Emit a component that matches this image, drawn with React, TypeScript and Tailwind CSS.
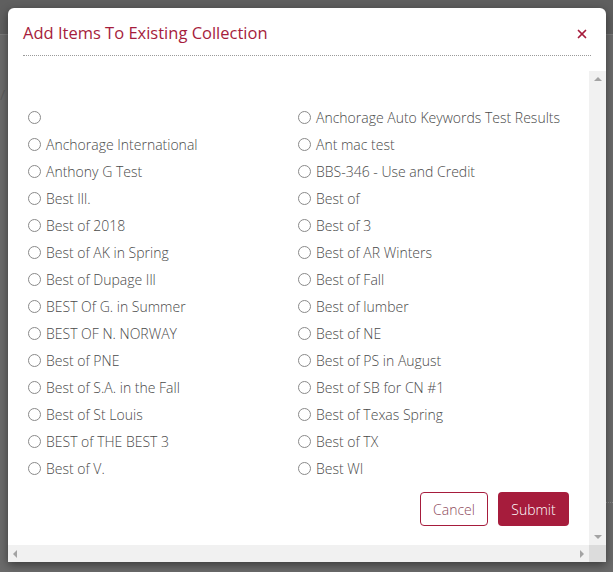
import { X } from "lucide-react";

const leftItems = [
  "",
  "Anchorage International",
  "Anthony G Test",
  "Best Ill.",
  "Best of 2018",
  "Best of AK in Spring",
  "Best of Dupage Ill",
  "BEST Of G. in Summer",
  "BEST OF N. NORWAY",
  "Best of PNE",
  "Best of S.A. in the Fall",
  "Best of St Louis",
  "BEST of THE BEST 3",
  "Best of V.",
];

const rightItems = [
  "Anchorage Auto Keywords Test Results",
  "Ant mac test",
  "BBS-346 - Use and Credit",
  "Best of",
  "Best of 3",
  "Best of AR Winters",
  "Best of Fall",
  "Best of lumber",
  "Best of NE",
  "Best of PS in August",
  "Best of SB for CN #1",
  "Best of Texas Spring",
  "Best of TX",
  "Best WI",
];

function RadioRow({ label }: { label: string }) {
  return (
    <label className="flex h-[27px] items-center gap-[5px] whitespace-nowrap">
      <span className="h-[13px] w-[13px] shrink-0 rounded-full border border-[#8a8a8a] bg-white" />
      <span>{label}</span>
    </label>
  );
}

function Arrow({ dir }: { dir: "up" | "down" | "left" | "right" }) {
  const shapes = {
    up: "border-x-[4px] border-b-[4px] border-x-transparent border-b-[#a3a3a3]",
    down: "border-x-[4px] border-t-[4px] border-x-transparent border-t-[#a3a3a3]",
    left: "border-y-[4px] border-r-[4px] border-y-transparent border-r-[#a3a3a3]",
    right: "border-y-[4px] border-l-[4px] border-y-transparent border-l-[#a3a3a3]",
  };
  return <span className={`block h-0 w-0 ${shapes[dir]}`} />;
}

export default function App() {
  return (
    <div
      className="relative h-[572px] w-[613px] overflow-hidden bg-[#6b6b6b] pl-2 pt-2"
      style={{ fontFamily: '"Open Sans", "Noto Sans", sans-serif' }}
    >
      {/* page behind the backdrop */}
      <div className="absolute inset-x-0 top-0 h-[35px] border-b border-[#7a7a7a] bg-[#5f5f5f]" />
      <span className="absolute left-0 top-[84px] text-[14px] text-[#5a5a5a]">/</span>
      <div className="absolute right-0 top-[502px] w-[7px] border-t border-dotted border-[#8a8a8a]" />

      <div className="relative flex h-[554px] w-[598px] flex-col rounded-t-[6px] bg-white shadow-[0_3px_10px_rgba(0,0,0,0.45)]">
        <div className="mx-[15px] flex h-[48px] items-center justify-between border-b border-dotted border-[#9a9a9a] pt-[4px]">
          <h2 className="text-[16.5px] font-normal text-[#a61c3c]">
            Add Items To Existing Collection
          </h2>
          <X size={14} strokeWidth={3} className="mr-[2px] text-[#a61c3c]" />
        </div>

        <div className="mt-[15px] flex min-h-0 flex-1 flex-col">
          <div className="flex min-h-0 flex-1">
            <div className="flex flex-1 flex-col pl-5 pr-5 pt-[33px] text-[14px] font-light text-[#4a4a4a]">
              <div className="grid grid-cols-[270px_1fr]">
                <div className="flex flex-col">
                  {leftItems.map((item, i) => (
                    <RadioRow key={i} label={item} />
                  ))}
                </div>
                <div className="flex flex-col">
                  {rightItems.map((item) => (
                    <RadioRow key={item} label={item} />
                  ))}
                </div>
              </div>
              <div className="mt-[10px] flex justify-end gap-[10px]">
                <button
                  type="button"
                  className="h-[34px] w-[68px] rounded-[4px] border border-[#a61c3c] bg-white text-[14px] font-light text-[#8d4a5b]"
                >
                  Cancel
                </button>
                <button
                  type="button"
                  className="h-[34px] w-[71px] rounded-[4px] bg-[#a61c3c] text-[14px] text-white"
                >
                  Submit
                </button>
              </div>
            </div>
            <div className="flex w-[17px] flex-col items-center justify-between bg-[#f1f1f1] py-[6px]">
              <Arrow dir="up" />
              <Arrow dir="down" />
            </div>
          </div>
          <div className="flex h-[17px]">
            <div className="flex flex-1 items-center justify-between bg-[#f1f1f1] px-[5px]">
              <Arrow dir="left" />
              <Arrow dir="right" />
            </div>
            <div className="w-[17px] bg-[#dcdcdc]" />
          </div>
        </div>
      </div>
    </div>
  );
}
